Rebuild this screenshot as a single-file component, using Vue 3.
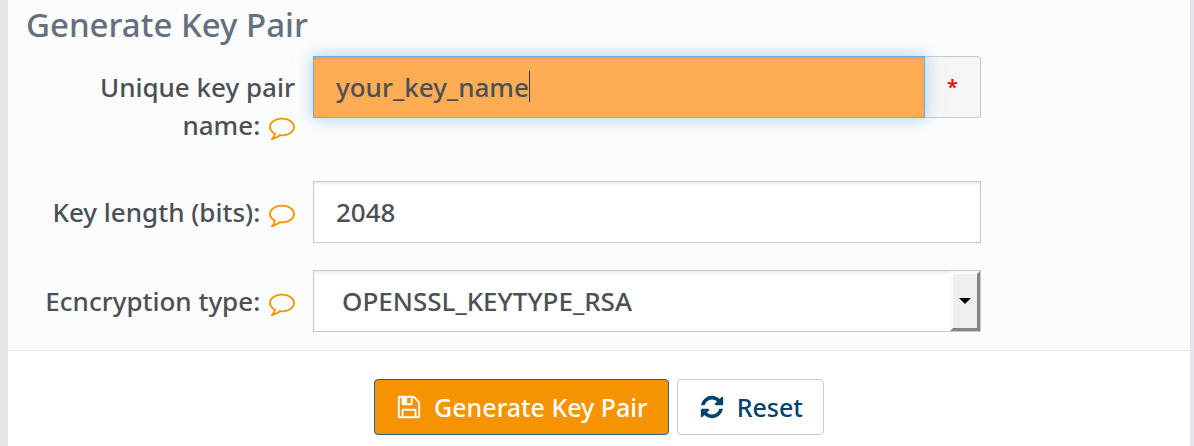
<script setup>
import { ref } from 'vue'

const keyName = ref('your_key_name')
const keyLength = ref('2048')
const keyType = ref('OPENSSL_KEYTYPE_RSA')

const commentPath =
  'M896 384q-204 0-381.5 69.5t-282 187.5-104.5 255q0 112 71.5 213.5t201.5 175.5l87 50-27 96q-24 91-70 172 152-63 275-171l43-38 57 6q69 8 130 8 204 0 381.5-69.5t282-187.5 104.5-255-104.5-255-282-187.5-381.5-69.5zm896 512q0 174-120 321.5t-326 233-450 85.5q-70 0-145-8-198 175-460 242-49 14-114 22h-5q-15 0-27-10.5t-16-27.5v-1q-3-4-.5-12t2-10 4.5-9.5l6-9 7-8.5 8-9q7-8 31-34.5t34.5-38 31-39.5 32.5-51 27-59 26-76q-157-89-247.5-220t-90.5-281q0-174 120-321.5t326-233 450-85.5 450 85.5 326 233 120 321.5z'

function reset() {
  keyName.value = ''
  keyLength.value = '2048'
  keyType.value = 'OPENSSL_KEYTYPE_RSA'
}
</script>

<template>
  <form class="page" @submit.prevent @reset.prevent="reset">
    <section class="panel">
      <h2 class="title">Generate Key Pair</h2>

      <div class="row">
        <label class="label" for="key-name">
          Unique key pair name:
          <svg class="icon hint" viewBox="0 0 1792 1792" aria-hidden="true"><path :d="commentPath" /></svg>
        </label>
        <div class="group">
          <div class="field">
            <input id="key-name" v-model="keyName" class="control active" type="text" required />
            <span class="caret"></span>
          </div>
          <span class="addon">*</span>
        </div>
      </div>

      <div class="row">
        <label class="label" for="key-length">
          Key length (bits):
          <svg class="icon hint" viewBox="0 0 1792 1792" aria-hidden="true"><path :d="commentPath" /></svg>
        </label>
        <input id="key-length" v-model="keyLength" class="control" type="text" />
      </div>

      <div class="row">
        <label class="label" for="key-type">
          Ecncryption type:
          <svg class="icon hint" viewBox="0 0 1792 1792" aria-hidden="true"><path :d="commentPath" /></svg>
        </label>
        <div class="field">
          <select id="key-type" v-model="keyType" class="control select">
            <option>OPENSSL_KEYTYPE_RSA</option>
          </select>
          <span class="drop"><span class="arrow"></span></span>
        </div>
      </div>
    </section>

    <footer class="actions">
      <button class="button primary" type="submit">
        <svg class="icon" viewBox="0 0 1792 1792" aria-hidden="true">
          <path d="M512 1536h768v-384h-768v384zm896 0h128v-896q0-14-10-38.5t-20-34.5l-281-281q-10-10-34-20t-39-10v416q0 40-28 68t-68 28h-576q-40 0-68-28t-28-68v-416h-128v1280h128v-416q0-40 28-68t68-28h832q40 0 68 28t28 68v416zm-384-928v-320q0-13-9.5-22.5t-22.5-9.5h-192q-13 0-22.5 9.5t-9.5 22.5v320q0 13 9.5 22.5t22.5 9.5h192q13 0 22.5-9.5t9.5-22.5zm640 32v928q0 40-28 68t-68 28h-1344q-40 0-68-28t-28-68v-1344q0-40 28-68t68-28h928q40 0 88 20t76 48l280 280q28 28 48 76t20 88z" />
        </svg>
        Generate Key Pair
      </button>
      <button class="button" type="reset">
        <svg class="icon" viewBox="0 0 1792 1792" aria-hidden="true">
          <path d="M1639 1056q0 5-1 7-64 268-268 434.5t-478 166.5q-146 0-282.5-55t-243.5-157l-129 129q-19 19-45 19t-45-19-19-45v-448q0-26 19-45t45-19h448q26 0 45 19t19 45-19 45l-137 137q71 66 161 102t187 36q134 0 250-65t186-179q11-17 53-117 8-23 30-23h192q13 0 22.5 9.5t9.5 22.5zm25-800v448q0 26-19 45t-45 19h-448q-26 0-45-19t-19-45 19-45l138-138q-148-137-349-137-134 0-250 65t-186 179q-11 17-53 117-8 23-30 23h-199q-13 0-22.5-9.5t-9.5-22.5v-7q65-268 270-434.5t480-166.5q146 0 284 55.5t245 156.5l130-129q19-19 45-19t45 19 19 45z" />
        </svg>
        Reset
      </button>
    </footer>
  </form>
</template>

<style>
body {
  background: #fff;
}
</style>

<style scoped>
.page {
  box-sizing: border-box;
  min-height: 100vh;
  border-left: 8px solid #e3e7ea;
  border-right: 4px solid #e3e5e8;
  font-family: "Noto Sans", "Open Sans", sans-serif;
  font-size: 26px;
  font-weight: 500;
  line-height: 38px;
  color: #4b5057;
}
.panel {
  display: flex;
  flex-direction: column;
  gap: 27px;
  padding-bottom: 18px;
  background: #fcfcfc;
  border-bottom: 1px solid #ececec;
}
.title {
  margin: 0 0 -27px;
  padding: 0 18px 6px;
  font-size: 33px;
  font-weight: 500;
  line-height: 50px;
  color: #647080;
}
.row {
  display: grid;
  grid-template-columns: 305px minmax(0, 668fr) 209fr;
  align-items: start;
}
.label {
  box-sizing: border-box;
  padding: 12px 18px 10px 36px;
  text-align: right;
}
.icon {
  width: 26px;
  height: 26px;
  fill: currentColor;
}
.hint {
  margin-left: 2px;
  vertical-align: -5px;
  color: #f59300;
}
.group {
  display: flex;
}
.field {
  position: relative;
  flex: 1;
}
.control {
  box-sizing: border-box;
  display: block;
  width: 100%;
  height: 62px;
  margin: 0;
  padding: 0 22px;
  border: 1px solid #c8c8c8;
  border-radius: 0;
  background: #fff;
  box-shadow: inset 0 2px 3px rgba(0, 0, 0, 0.08);
  font: inherit;
  color: inherit;
  outline: none;
}
.active {
  position: relative;
  z-index: 1;
  background: #ffad55;
  border-color: #66afe9;
  box-shadow: inset 0 2px 3px rgba(0, 0, 0, 0.08), 0 0 16px rgba(102, 175, 233, 0.6);
}
.caret {
  position: absolute;
  z-index: 2;
  top: 15px;
  left: 216px;
  width: 1px;
  height: 31px;
  background: #333;
}
.addon {
  box-sizing: border-box;
  width: 56px;
  border: 1px solid #c8c8c8;
  border-left: 0;
  border-radius: 0 4px 4px 0;
  background: #f6f6f6;
  font-size: 20px;
  font-weight: 600;
  line-height: 60px;
  text-align: center;
  color: #f00;
}
.select {
  appearance: none;
  padding: 0 50px 0 28px;
}
.drop {
  position: absolute;
  top: 1px;
  right: 1px;
  bottom: 1px;
  display: grid;
  place-items: center;
  width: 24px;
  border: 3px solid;
  border-color: #fafbfc #868686 #868686 #fafbfc;
  background: #efefef;
  pointer-events: none;
}
.arrow {
  border: 6px solid transparent;
  border-top-color: #000;
  border-bottom: 0;
}
.actions {
  display: flex;
  justify-content: center;
  gap: 8px;
  padding: 28px 18px 11px;
}
.button {
  display: flex;
  align-items: center;
  gap: 12px;
  height: 56px;
  padding: 0 20px 0 21px;
  border: 1px solid #ccc;
  border-radius: 4px;
  background: #fff;
  font: inherit;
  font-size: 25px;
  color: #00426f;
}
.primary {
  border-color: #2a6090;
  background: #f59300;
  color: #fff;
}
</style>
